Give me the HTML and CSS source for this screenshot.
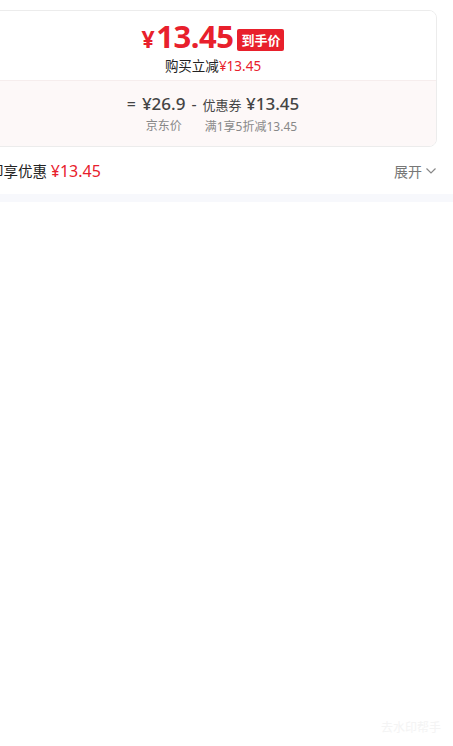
FILE: index.html
```html
<!DOCTYPE html>
<html lang="zh-CN">
<head>
  <meta charset="UTF-8">
  <title>到手价</title>
  <link rel="stylesheet" href="styles.css">
</head>
<body>
  <div class="page">
    <!-- 价格卡片 -->
    <div class="price-card">
      <div class="price-top">
        <div class="final-line">
          <span class="final-price"><span class="yen">¥</span>13.45</span>
          <span class="final-tag">到手价</span>
        </div>
        <div class="save-line">购买立减<span class="red">¥13.45</span></div>
      </div>
      <div class="price-calc">
        <div class="calc-line">
          <span class="op">=</span>
          <span class="col">
            <span class="num">¥26.9</span>
            <span class="label">京东价</span>
          </span>
          <span class="op minus">-</span>
          <span class="col">
            <span class="num"><span class="small">优惠券</span> ¥13.45</span>
            <span class="label">满1享5折减13.45</span>
          </span>
        </div>
      </div>
    </div>

    <!-- 优惠行 -->
    <div class="promo-row">
      <span class="promo-text">即享优惠 <span class="red promo-price">¥13.45</span></span>
      <span class="expand">展开
        <svg width="12" height="8" viewBox="0 0 12 8"><path d="M1.5 1.5 L6 6 L10.5 1.5" fill="none" stroke="#888" stroke-width="1.2"/></svg>
      </span>
    </div>
  </div>
  <div class="band"></div>
  <div class="watermark">去水印帮手</div>
</body>
</html>
```

FILE: styles.css
```css
/* 基本样式 */
body {
  margin: 0;
  background: #fff;
  font-family: "Noto Sans", "Noto Sans CJK SC", sans-serif;
  color: #222;
  height: 746px;
  position: relative;
  overflow: hidden;
}
.page {
  margin: 0 16px 0 -11px;
  padding-top: 10px;
}
/* 价格卡片 */
.price-card {
  border: 1px solid #ececec;
  border-radius: 8px;
  overflow: hidden;
}
.price-top {
  height: 69px;
  text-align: center;
  background: #fff;
}
.final-line {
  display: flex;
  justify-content: center;
  align-items: center;
  height: 46px;
  padding-top: 4px;
  box-sizing: border-box;
}
.final-price {
  color: #e8202c;
  font-size: 31px;
  font-weight: 700;
  letter-spacing: -0.5px;
  line-height: 1;
}
.final-price .yen {
  font-size: 23px;
  margin-right: 2px;
}
.final-tag {
  background: #e8202c;
  color: #fff;
  font-size: 13px;
  font-weight: 700;
  padding: 0 4px;
  height: 22px;
  line-height: 22px;
  border-radius: 2px;
  margin-left: 4px;
  margin-top: 7px;
}
.save-line {
  font-size: 13.5px;
  line-height: 18px;
  color: #222;
}
.red {
  color: #e8202c;
}
/* 计算区 */
.price-calc {
  background: #fdf8f8;
  height: 66px;
  border-top: 1px solid #f6eded;
  box-sizing: border-box;
}
.calc-line {
  display: flex;
  justify-content: center;
  align-items: flex-start;
  padding-top: 11px;
  color: #444;
}
.op {
  font-size: 16px;
  line-height: 24px;
  margin-right: 6px;
}
.op.minus {
  margin: 0 6px;
}
.col {
  display: flex;
  flex-direction: column;
  align-items: center;
}
.num {
  font-size: 17px;
  font-weight: 500;
  line-height: 24px;
}
.num .small {
  font-size: 13px;
  font-weight: 400;
}
.label {
  font-size: 12px;
  color: #888;
  line-height: 20px;
}
/* 优惠行 */
.promo-row {
  display: flex;
  justify-content: space-between;
  align-items: center;
  height: 47px;
  font-size: 14.5px;
}
.promo-price {
  font-size: 16px;
}
.expand {
  color: #777;
  font-size: 14px;
  display: flex;
  align-items: center;
  gap: 3px;
}
.band {
  height: 8px;
  background: #f7f8fc;
}
.watermark {
  position: absolute;
  right: 12px;
  bottom: 10px;
  font-size: 12px;
  color: #f4f4f4;
}
```
